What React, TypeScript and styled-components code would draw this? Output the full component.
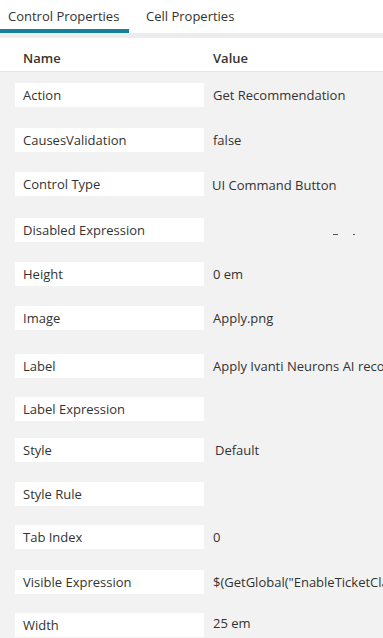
import React from "react";
import styled, { createGlobalStyle } from "styled-components";

const GlobalStyle = createGlobalStyle`
  html, body {
    margin: 0;
    padding: 0;
    background: #f2f2f2;
  }
  body {
    font-family: "Open Sans", "Liberation Sans", sans-serif;
    color: #333;
  }
`;

const Page = styled.div`
  width: 383px;
  height: 638px;
  overflow: hidden;
  background: #f2f2f2;
`;

// Tabs

const TabBar = styled.div`
  display: flex;
  height: 33px;
  background: #fff;
  border-bottom: 5px solid #ececec;
`;

const Tab = styled.div<{ $active?: boolean }>`
  box-sizing: border-box;
  height: 33px;
  padding: 7px 0 0 ${(p) => (p.$active ? "8px" : "17px")};
  width: ${(p) => (p.$active ? "129px" : "auto")};
  font-size: 13px;
  color: #333;
  border-bottom: 4px solid ${(p) => (p.$active ? "#17809b" : "transparent")};
`;

// Header

const Header = styled.div`
  display: flex;
  align-items: center;
  box-sizing: border-box;
  height: 34px;
  padding-top: 6px;
  background: #fff;
  border-bottom: 1px solid #e6e6e6;
  font-size: 13px;
  font-weight: 600;
`;

const HeadCell = styled.div<{ $w?: number; $pad: number }>`
  width: ${(p) => (p.$w ? `${p.$w}px` : "auto")};
  padding-left: ${(p) => p.$pad}px;
  box-sizing: border-box;
`;

// Rows

const List = styled.div`
  display: flex;
  flex-direction: column;
  padding-top: 11px;
`;

const Row = styled.div<{ $gap: number }>`
  display: flex;
  align-items: center;
  margin-top: ${(p) => p.$gap}px;
  white-space: nowrap;
`;

const NameBox = styled.div`
  box-sizing: border-box;
  width: 189px;
  height: 24px;
  margin-left: 15px;
  padding-left: 8px;
  background: #fff;
  font-size: 13px;
  line-height: 24px;
  flex-shrink: 0;
`;

const Value = styled.div<{ $indent?: number; $shift?: number }>`
  padding-left: ${(p) => 9 + (p.$indent || 0)}px;
  font-size: 13px;
  position: relative;
  top: ${(p) => p.$shift || 0}px;
`;

const Dashes = styled.div`
  display: flex;
  gap: 15px;
  margin-left: 129px;
  margin-top: 9px;
`;

const Dash = styled.span<{ $w: number }>`
  display: block;
  width: ${(p) => p.$w}px;
  height: 1px;
  background: #555;
`;

type Prop = { name: string; value?: string; gap: number; indent?: number; shift?: number; dashes?: boolean };

const rows: Prop[] = [
  { name: "Action", value: "Get Recommendation", gap: 0 },
  { name: "CausesValidation", value: "false", gap: 21 },
  { name: "Control Type", value: "UI Command Button", gap: 20, indent: -1, shift: 1 },
  { name: "Disabled Expression", gap: 22, dashes: true },
  { name: "Height", value: "0 em", gap: 20 },
  { name: "Image", value: "Apply.png", gap: 20 },
  { name: "Label", value: "Apply Ivanti Neurons AI recommendation", gap: 24 },
  { name: "Label Expression", gap: 19 },
  { name: "Style", value: "Default", gap: 17, indent: 2 },
  { name: "Style Rule", gap: 20 },
  { name: "Tab Index", value: "0", gap: 19 },
  { name: "Visible Expression", value: "$(GetGlobal(\"EnableTicketClassification\"))", gap: 21 },
  { name: "Width", value: "25 em", gap: 19, shift: -2 },
];

export default function App() {
  return (
    <Page>
      <GlobalStyle />
      <TabBar>
        <Tab $active>Control Properties</Tab>
        <Tab>Cell Properties</Tab>
      </TabBar>
      <Header>
        <HeadCell $w={204} $pad={23}>Name</HeadCell>
        <HeadCell $pad={9}>Value</HeadCell>
      </Header>
      <List>
        {rows.map((r) => (
          <Row key={r.name} $gap={r.gap}>
            <NameBox>{r.name}</NameBox>
            {r.dashes ? (
              <Dashes>
                <Dash $w={5} />
                <Dash $w={2} />
              </Dashes>
            ) : (
              r.value && (
                <Value $indent={r.indent} $shift={r.shift}>
                  {r.value}
                </Value>
              )
            )}
          </Row>
        ))}
      </List>
    </Page>
  );
}
